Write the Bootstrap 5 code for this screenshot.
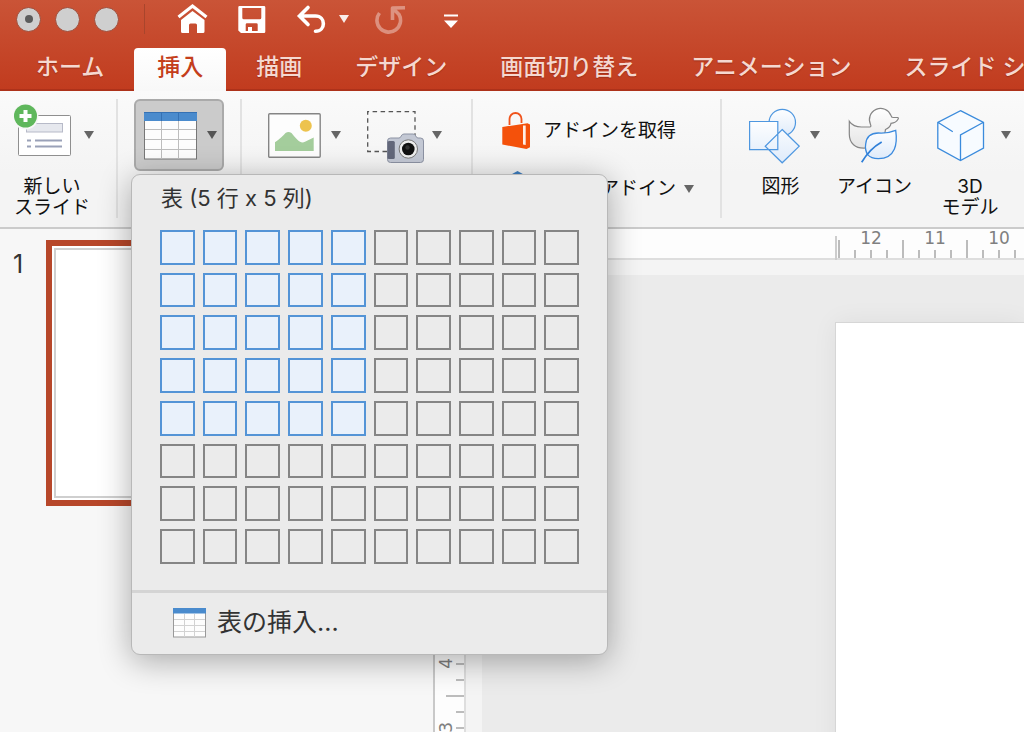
<!DOCTYPE html>
<html lang="ja">
<head>
<meta charset="utf-8">
<meta name="viewport" content="width=device-width, initial-scale=1">
<title>プレゼンテーション</title>
<link href="https://cdn.jsdelivr.net/npm/bootstrap@5.3.0/dist/css/bootstrap.min.css" rel="stylesheet">
<style>
  body { font-family: Inter, "Noto Sans CJK JP", sans-serif; color: #111; background: #ebebeb; }
  button { background: none; border: 0; padding: 0; color: inherit; }
  svg { display: block; flex-shrink: 0; }
  .app { min-height: 100vh; height: 100vh; }

  /* title bar and tabs */
  .app-head { background: linear-gradient(#ca5437, #c13b1e); box-shadow: inset 0 -2px 0 #ad321a; }
  .title-row { height: 38px; padding-left: 16px; margin-bottom: 10px; }
  .lights { gap: 14px; }
  .light { width: 25px; height: 25px; border-radius: 50%; background: #cfcfcf; border: 1px solid #a04a36; }
  .light-dot { width: 8px; height: 8px; border-radius: 50%; background: #5c5c5c; }
  .title-rule { width: 1px; height: 30px; margin: 0 32px 0 25px; background: #a9452c; }
  .quick { gap: 30px; }
  .history { gap: 26px; }
  .tabs { gap: 7px; padding-left: 13px; }
  .tab { height: 43px; padding: 0 23px 5px; font-size: 23px; font-weight: 500; line-height: 38px; color: #f5d8d0; text-shadow: 0 1px 1px #9c2f19; }
  .tab.active { background: linear-gradient(#fff, #f8f8f8); color: #c43e1c; border-radius: 4px 4px 0 0; text-shadow: none; }

  /* ribbon */
  .ribbon { background: linear-gradient(#fafafa, #f4f4f4 60%); border-bottom: 2px solid #cbcbcb; padding: 8px 0 9px; position: relative; z-index: 2; }
  .group { height: 119px; border-right: 2px solid #e2e2e2; }
  .group:last-child { border-right: 0; }
  .tool { font-size: 19px; line-height: 21px; }
  .tool-face { height: 72px; margin-bottom: 5px; gap: 10px; }
  .tool-face.tight { gap: 7px; }
  .tool-face.loose { gap: 16px; }
  .tool-name { padding-right: 8px; }
  .g-slide { padding: 0 22px 0 14px; }
  .g-slide .tool-name { padding-right: 4px; }
  .g-table { padding: 0 16px; }
  .g-media { padding: 0 29px 0 26px; gap: 26px; }
  .g-addin { padding: 3px 26px 0 29px; }
  .g-shape { padding-left: 27px; gap: 17px; }
  .table-btn { height: 72px; padding: 0 5px 0 8px; gap: 10px; border: 2px solid #aaa; border-radius: 6px; background: #cbcbcb; }
  .addin { height: 58px; font-size: 19px; }

  /* table size menu */
  .size-menu { position: absolute; top: 75px; left: 13px; width: 477px; background: #ebebeb; border: 1px solid #b8b8b8; border-radius: 9px; box-shadow: 0 6px 32px rgba(0,0,0,.32); z-index: 5; }
  .size-title { font-size: 22px; line-height: 46px; color: #333; padding: 0 29px; }
  .size-grid { display: grid; grid-template-columns: repeat(10, 1fr); gap: 8px; padding: 9px 28px 26px; }
  .cell { aspect-ratio: 1; border: 2px solid #858585; }
  .cell.on { border-color: #5494d6; background: #e9f1fb; }
  .menu-rule { height: 3px; background: #d4d4d4; }
  .menu-item { height: 61px; padding: 0 41px; gap: 11px; font-size: 25px; color: #333; }

  /* work area */
  .thumbs { flex: 0 0 433px; background: #f7f7f7; padding: 11px 23px 0 13px; font-size: 25px; line-height: 48px; color: #333; }
  .thumb { width: 364px; height: 266px; border: 6px solid #b7472a; background: #fff; padding: 2px; }
  .thumb-page { height: 100%; border: 2px solid #cfcfcf; }
  .stage { border-left: 2px solid #c9c9c9; min-width: 0; }
  .ruler-x { height: 31px; background: #fdfdfd; border-bottom: 2px solid #dedede; padding-left: 400px; font: 17px/19px "DejaVu Sans", sans-serif; color: #808080; }
  .ruler-start { width: 2px; height: 29px; margin: 7px 1px 0 0; background: #cdcdcd; }
  .seg-x { flex: 0 0 64px; height: 29px; text-align: center; padding-left: 2px;
    background: linear-gradient(#bcbcbc, #bcbcbc) 0 100% / 2px 18px no-repeat, repeating-linear-gradient(90deg, #bcbcbc 0 2px, transparent 2px 16px) 0 100% / 100% 8px no-repeat; }
  .band-x { height: 15px; background: #f4f4f4; }
  .ruler-y { flex: 0 0 31px; background: #fdfdfd; border-right: 2px solid #dedede; padding-top: 100px; font: 17px/20px "DejaVu Sans", sans-serif; color: #808080; }
  .seg-y { height: 64px; padding-right: 8px;
    background: linear-gradient(#bcbcbc, #bcbcbc) 100% 0 / 18px 2px no-repeat, repeating-linear-gradient(#bcbcbc 0 2px, transparent 2px 16px) 100% 0 / 8px 100% no-repeat; }
  .seg-y span { writing-mode: vertical-rl; transform: rotate(180deg); }
  .band-y { flex: 0 0 16px; background: #f4f4f4; }
  .canvas { padding: 47px 0 0 353px; }
  .page { background: #fff; border: 1px solid #d6d6d6; border-right: 0; border-bottom: 0; box-shadow: 0 0 24px rgba(0,0,0,.06); }
</style>
</head>
<body>
<div class="app d-flex flex-column overflow-hidden">
  <svg width="0" height="0" class="position-absolute" aria-hidden="true">
    <defs>
      <symbol id="caret" viewBox="0 0 10 8"><path d="M0 0h10L5 8z" fill="currentColor"/></symbol>
      <linearGradient id="blueFill" x1="0" y1="0" x2="0" y2="1"><stop offset="0" stop-color="#fdfeff"/><stop offset="1" stop-color="#dfebfa"/></linearGradient>
      <linearGradient id="greyFill" x1="0" y1="0" x2="0" y2="1"><stop offset="0" stop-color="#fff"/><stop offset="1" stop-color="#e4e4e4"/></linearGradient>
    </defs>
  </svg>

  <header class="app-head flex-shrink-0">
    <div class="title-row d-flex align-items-center text-white">
      <div class="lights d-flex">
        <button class="light d-flex align-items-center justify-content-center" aria-label="閉じる"><span class="light-dot"></span></button>
        <button class="light" aria-label="しまう"></button>
        <button class="light" aria-label="拡大"></button>
      </div>
      <span class="title-rule"></span>
      <div class="quick d-flex align-items-center">
        <button aria-label="ホーム"><svg width="31" height="38" viewBox="0 0 31 38"><path d="M1.500 17 15.500 6l14 11" fill="none" stroke="#fff" stroke-width="3.200"/><path d="M4 20 15.500 11 27.500 20v11.500q0 1.500-1.500 1.500h-6V25q0-1.500-1.500-1.500h-5Q12 23.500 12 25v8H5.500Q4 33 4 31.500z" fill="#fff"/></svg></button>
        <button aria-label="保存"><svg width="28" height="38" viewBox="0 0 28 38"><path fill="#fff" fill-rule="evenodd" d="M1.500 6H26q1.300 0 1.300 1.300V31.700Q27.300 33 26 33H3L.300 30.500V7.300Q.300 6 1.500 6zM4.300 8v9.800q0 1.500 1.500 1.500h16q1.500 0 1.500-1.500V8zM9 23.300q-1.300 0-1.300 1.300V31H10v-4h4v4h5.700v-6.400q0-1.300-1.300-1.300z"/></svg></button>
        <div class="history d-flex align-items-center me-2">
          <div class="d-flex align-items-center">
            <button aria-label="元に戻す"><svg width="31" height="38" viewBox="0 0 31 38"><path d="M12 7.500 3.500 16l8.500 8.500M4 16h15.500c10.500 0 10.500 15.300 0 15.300" fill="none" stroke="#fff" stroke-width="3.600" stroke-linecap="round"/></svg></button>
            <button class="ms-2 ps-1" aria-label="元に戻すの履歴"><svg width="10" height="8" opacity=".9"><use href="#caret"/></svg></button>
          </div>
          <button aria-label="やり直し"><svg width="31" height="38" viewBox="0 0 31 38"><g opacity=".38" fill="none" stroke="#fff" stroke-width="3.600" stroke-linejoin="round"><path d="M30 7.800 17.500 8V20M4.500 13A11.800 11.800 0 1 0 24 14.500L18 8.500"/></g></svg></button>
        </div>
        <button aria-label="ツールバーのカスタマイズ"><svg width="14" height="38" viewBox="0 0 14 38"><path d="M0 14.500h14v2H0zM0 20.500h14l-7 7.500z" fill="#fff"/></svg></button>
      </div>
    </div>
    <nav class="tabs d-flex text-nowrap">
      <button class="tab">ホーム</button>
      <button class="tab active">挿入</button>
      <button class="tab">描画</button>
      <button class="tab">デザイン</button>
      <button class="tab">画面切り替え</button>
      <button class="tab">アニメーション</button>
      <button class="tab">スライド ショー</button>
    </nav>
  </header>

  <div class="ribbon d-flex flex-shrink-0 text-nowrap">
    <div class="group g-slide flex-shrink-0">
      <button class="tool">
        <span class="tool-face d-flex align-items-center justify-content-between">
          <svg width="58" height="64" viewBox="0 0 58 64"><rect x="4.500" y="12.500" width="52" height="40" rx="1" fill="#fff" stroke="#8f8f8f"/><rect x="12.500" y="20.500" width="36" height="8.500" fill="#e6e8ee" stroke="#b7bac8"/><path d="M13 37.500h4m4 0h27M13 43.500h4m4 0h27" stroke="#9aa1b8" stroke-width="2"/><circle cx="11.500" cy="13.500" r="13" fill="#f7f7f7"/><circle cx="11.500" cy="13" r="11.500" fill="#5fb75c"/><path d="M11.500 7v12m-6-6h12" stroke="#fff" stroke-width="4"/></svg>
          <svg width="10" height="8" color="#666"><use href="#caret"/></svg>
        </span>
        <span class="tool-name d-block">新しい<br>スライド</span>
      </button>
    </div>

    <div class="group g-table flex-shrink-0 position-relative">
      <button class="table-btn d-flex align-items-center" aria-label="表" aria-expanded="true">
        <svg width="53" height="64" viewBox="0 0 53 64"><rect x=".5" y="9.500" width="52" height="46.500" fill="#fdfdfd" stroke="#777"/><path d="M1 26.500h51M1 36.500h51M1 46.500h51M17.500 18v38M34.500 18v38" stroke="#bdbdbd"/><path d="M0 9h53v9H0z" fill="#4a8bcd"/><path d="M17.500 9v9M34.500 9v9M0 9.500h53" stroke="#3571b4"/></svg>
        <svg width="10" height="8" color="#555"><use href="#caret"/></svg>
      </button>
      <div class="size-menu">
        <div class="size-title">表 (5 行 x 5 列)</div>
        <div class="size-grid" id="sizeGrid"></div>
        <div class="menu-rule"></div>
        <button class="menu-item d-flex align-items-center w-100">
          <svg width="33" height="30" viewBox="0 0 33 30"><rect x=".5" y=".5" width="32" height="28.500" fill="#fdfdfd" stroke="#999"/><path d="M1 11.500h31M1 17.500h31M1 23.500h31M11.500 6v23M21.500 6v23" stroke="#d2d2d2"/><path d="M0 0h33v5.500H0z" fill="#4a8bcd"/></svg>
          <span>表の挿入...</span>
        </button>
      </div>
    </div>

    <div class="group g-media d-flex align-items-start flex-shrink-0">
      <button class="tool" aria-label="画像">
        <span class="tool-face d-flex align-items-center">
          <svg width="53" height="64" viewBox="0 0 53 64"><rect x=".7" y="10.700" width="51.500" height="43.500" rx="1" fill="#fdfdfd" stroke="#858585" stroke-width="1.400"/><circle cx="37.800" cy="22.800" r="6" fill="#edc34e"/><path d="M7 48v-8.700q7-5 10.500-9.300 3-2 6 0 5 6.500 8.500 8.800 2.500 1.500 5 0L45.700 34.500V48z" fill="#a4cd9c"/></svg>
          <svg width="10" height="8" color="#666"><use href="#caret"/></svg>
        </span>
      </button>
      <button class="tool" aria-label="スクリーンショット">
        <span class="tool-face tight d-flex align-items-center">
          <svg width="58" height="64" viewBox="0 0 58 64"><path d="M20 48.500H.7V8.700H48V32" fill="none" stroke="#555" stroke-width="1.300" stroke-dasharray="4.500 3.500"/><path d="M20.500 38q0-3 3-3H32q1.500 0 2.200-2 .8-2 2.800-2h9q2 0 2.800 2 .7 2 2.200 2h2.500q3 0 3 3v18.500q0 3-3 3h-30q-3 0-3-3z" fill="#c3c8d4" stroke="#8c92a3"/><rect x="20.500" y="38" width="7.300" height="18" rx="1.500" fill="#62677a"/><circle cx="41.300" cy="46" r="9.200" fill="#eee" stroke="#777"/><circle cx="41.300" cy="46" r="6.300" fill="#111"/><circle cx="40.500" cy="44.500" r="2.200" fill="#333"/></svg>
          <svg width="10" height="8" color="#666"><use href="#caret"/></svg>
        </span>
      </button>
    </div>

    <div class="group g-addin flex-shrink-0">
      <button class="addin d-flex align-items-center">
        <svg width="29" height="40" viewBox="0 0 29 40" class="me-2"><path d="M7.500 14V8a6 6 0 0 1 12 0v4" fill="none" stroke="#f0531c" stroke-width="1.800"/><path d="M.3 16 25.500 12.300 28 13.500V36.300L24.500 38 .3 33.500z" fill="#f4510b"/><path d="M21 14.500h2.700V34L21 33.500z" fill="#fff" opacity=".9"/></svg>
        <span class="ps-1">アドインを取得</span>
      </button>
      <button class="addin d-flex align-items-center">
        <svg width="29" height="40" viewBox="0 0 29 40" class="me-2"><path d="M15.500 2 27 8.500v17L15.500 32 4 25.500v-17z" fill="#3f7fc1"/></svg>
        <span class="ps-1">個人用アドイン</span>
        <svg width="10" height="8" color="#666" class="ms-2"><use href="#caret"/></svg>
      </button>
    </div>

    <div class="group g-shape d-flex align-items-start flex-shrink-0">
      <button class="tool">
        <span class="tool-face d-flex align-items-center">
          <svg width="51" height="64" viewBox="0 0 51 64"><g fill="url(#blueFill)" stroke="#4e97e0" stroke-width="1.200"><circle cx="33.300" cy="19.500" r="13.200"/><path d="M.6 18.500h28.200v28.200H.6zM33.200 26.500 50.300 43.200 33.200 59.800 16.200 43.200z"/></g></svg>
          <svg width="10" height="8" color="#666"><use href="#caret"/></svg>
        </span>
        <span class="tool-name d-block">図形</span>
      </button>
      <button class="tool">
        <span class="tool-face d-flex align-items-center justify-content-center">
          <svg width="54" height="64" viewBox="0 0 54 64"><path d="M1.300 18.300C3.500 21.500 7 24 13.500 24H22q1.500-.3.500-2.500a11.200 11.200 0 1 1 20.500-9q.3 2 2 2h4.500q1.500.2.500 1.800-2 3.700-7 4-.5 3.700-5.500 6.200l-.7 4L18 45C7 46 1.300 40 1.300 31z" fill="url(#greyFill)" stroke="#868686" stroke-width="1.200"/><path d="M47.700 27.300C49.500 40 48 55.500 30.300 55.700 26 55.700 22 54.500 19.700 51.700 18 49 17 45 17.700 41c.8-8 5-11 12.600-11 7 .5 12-.5 17.400-2.700z" fill="url(#blueFill)" stroke="#3b8ade" stroke-width="1.300"/><path d="M13.700 59.300C18 52 24 44.500 33.700 39" fill="none" stroke="#2f7fd8" stroke-width="1.700"/></svg>
        </span>
        <span class="d-block">アイコン</span>
      </button>
      <button class="tool ms-2">
        <span class="tool-face loose d-flex align-items-center">
          <svg width="48" height="64" viewBox="0 0 48 64"><path d="M23.500 7.700 46.500 19.300V45l-23 12.500L.8 45V19.300z" fill="#f7fbff"/><path d="M23.500 7.700 46.500 19.300V45l-23 12.500L.8 45V19.300zM23.500 57.500V32l23-12.700M.8 19.300l15 9.400" fill="none" stroke="#3b8bdc" stroke-width="1.300"/></svg>
          <svg width="10" height="8" color="#666"><use href="#caret"/></svg>
        </span>
        <span class="tool-name d-block">3D<br>モデル</span>
      </button>
    </div>
  </div>

  <main class="d-flex flex-grow-1">
    <aside class="thumbs d-flex align-items-start justify-content-between">
      <span>1</span>
      <div class="thumb"><div class="thumb-page"></div></div>
    </aside>
    <section class="stage flex-grow-1 d-flex flex-column">
      <div class="ruler-x d-flex">
        <span class="ruler-start flex-shrink-0"></span>
        <span class="seg-x">12</span><span class="seg-x">11</span><span class="seg-x">10</span>
      </div>
      <div class="band-x"></div>
      <div class="d-flex flex-grow-1">
        <div class="ruler-y">
          <div class="seg-y d-flex align-items-center justify-content-center"><span>8</span></div>
          <div class="seg-y d-flex align-items-center justify-content-center"><span>7</span></div>
          <div class="seg-y d-flex align-items-center justify-content-center"><span>6</span></div>
          <div class="seg-y d-flex align-items-center justify-content-center"><span>5</span></div>
          <div class="seg-y d-flex align-items-center justify-content-center"><span>4</span></div>
          <div class="seg-y d-flex align-items-center justify-content-center"><span>3</span></div>
        </div>
        <div class="band-y"></div>
        <div class="canvas flex-grow-1 d-flex"><div class="page flex-grow-1"></div></div>
      </div>
    </section>
  </main>
</div>
<script>
  const grid = document.getElementById('sizeGrid');
  for (let r = 1; r <= 8; r++) {
    for (let c = 1; c <= 10; c++) {
      const b = document.createElement('button');
      b.className = r <= 5 && c <= 5 ? 'cell on' : 'cell';
      b.setAttribute('aria-label', r + ' 行 x ' + c + ' 列');
      grid.append(b);
    }
  }
</script>
<script src="https://cdn.jsdelivr.net/npm/bootstrap@5.3.0/dist/js/bootstrap.bundle.min.js"></script>
</body>
</html>
